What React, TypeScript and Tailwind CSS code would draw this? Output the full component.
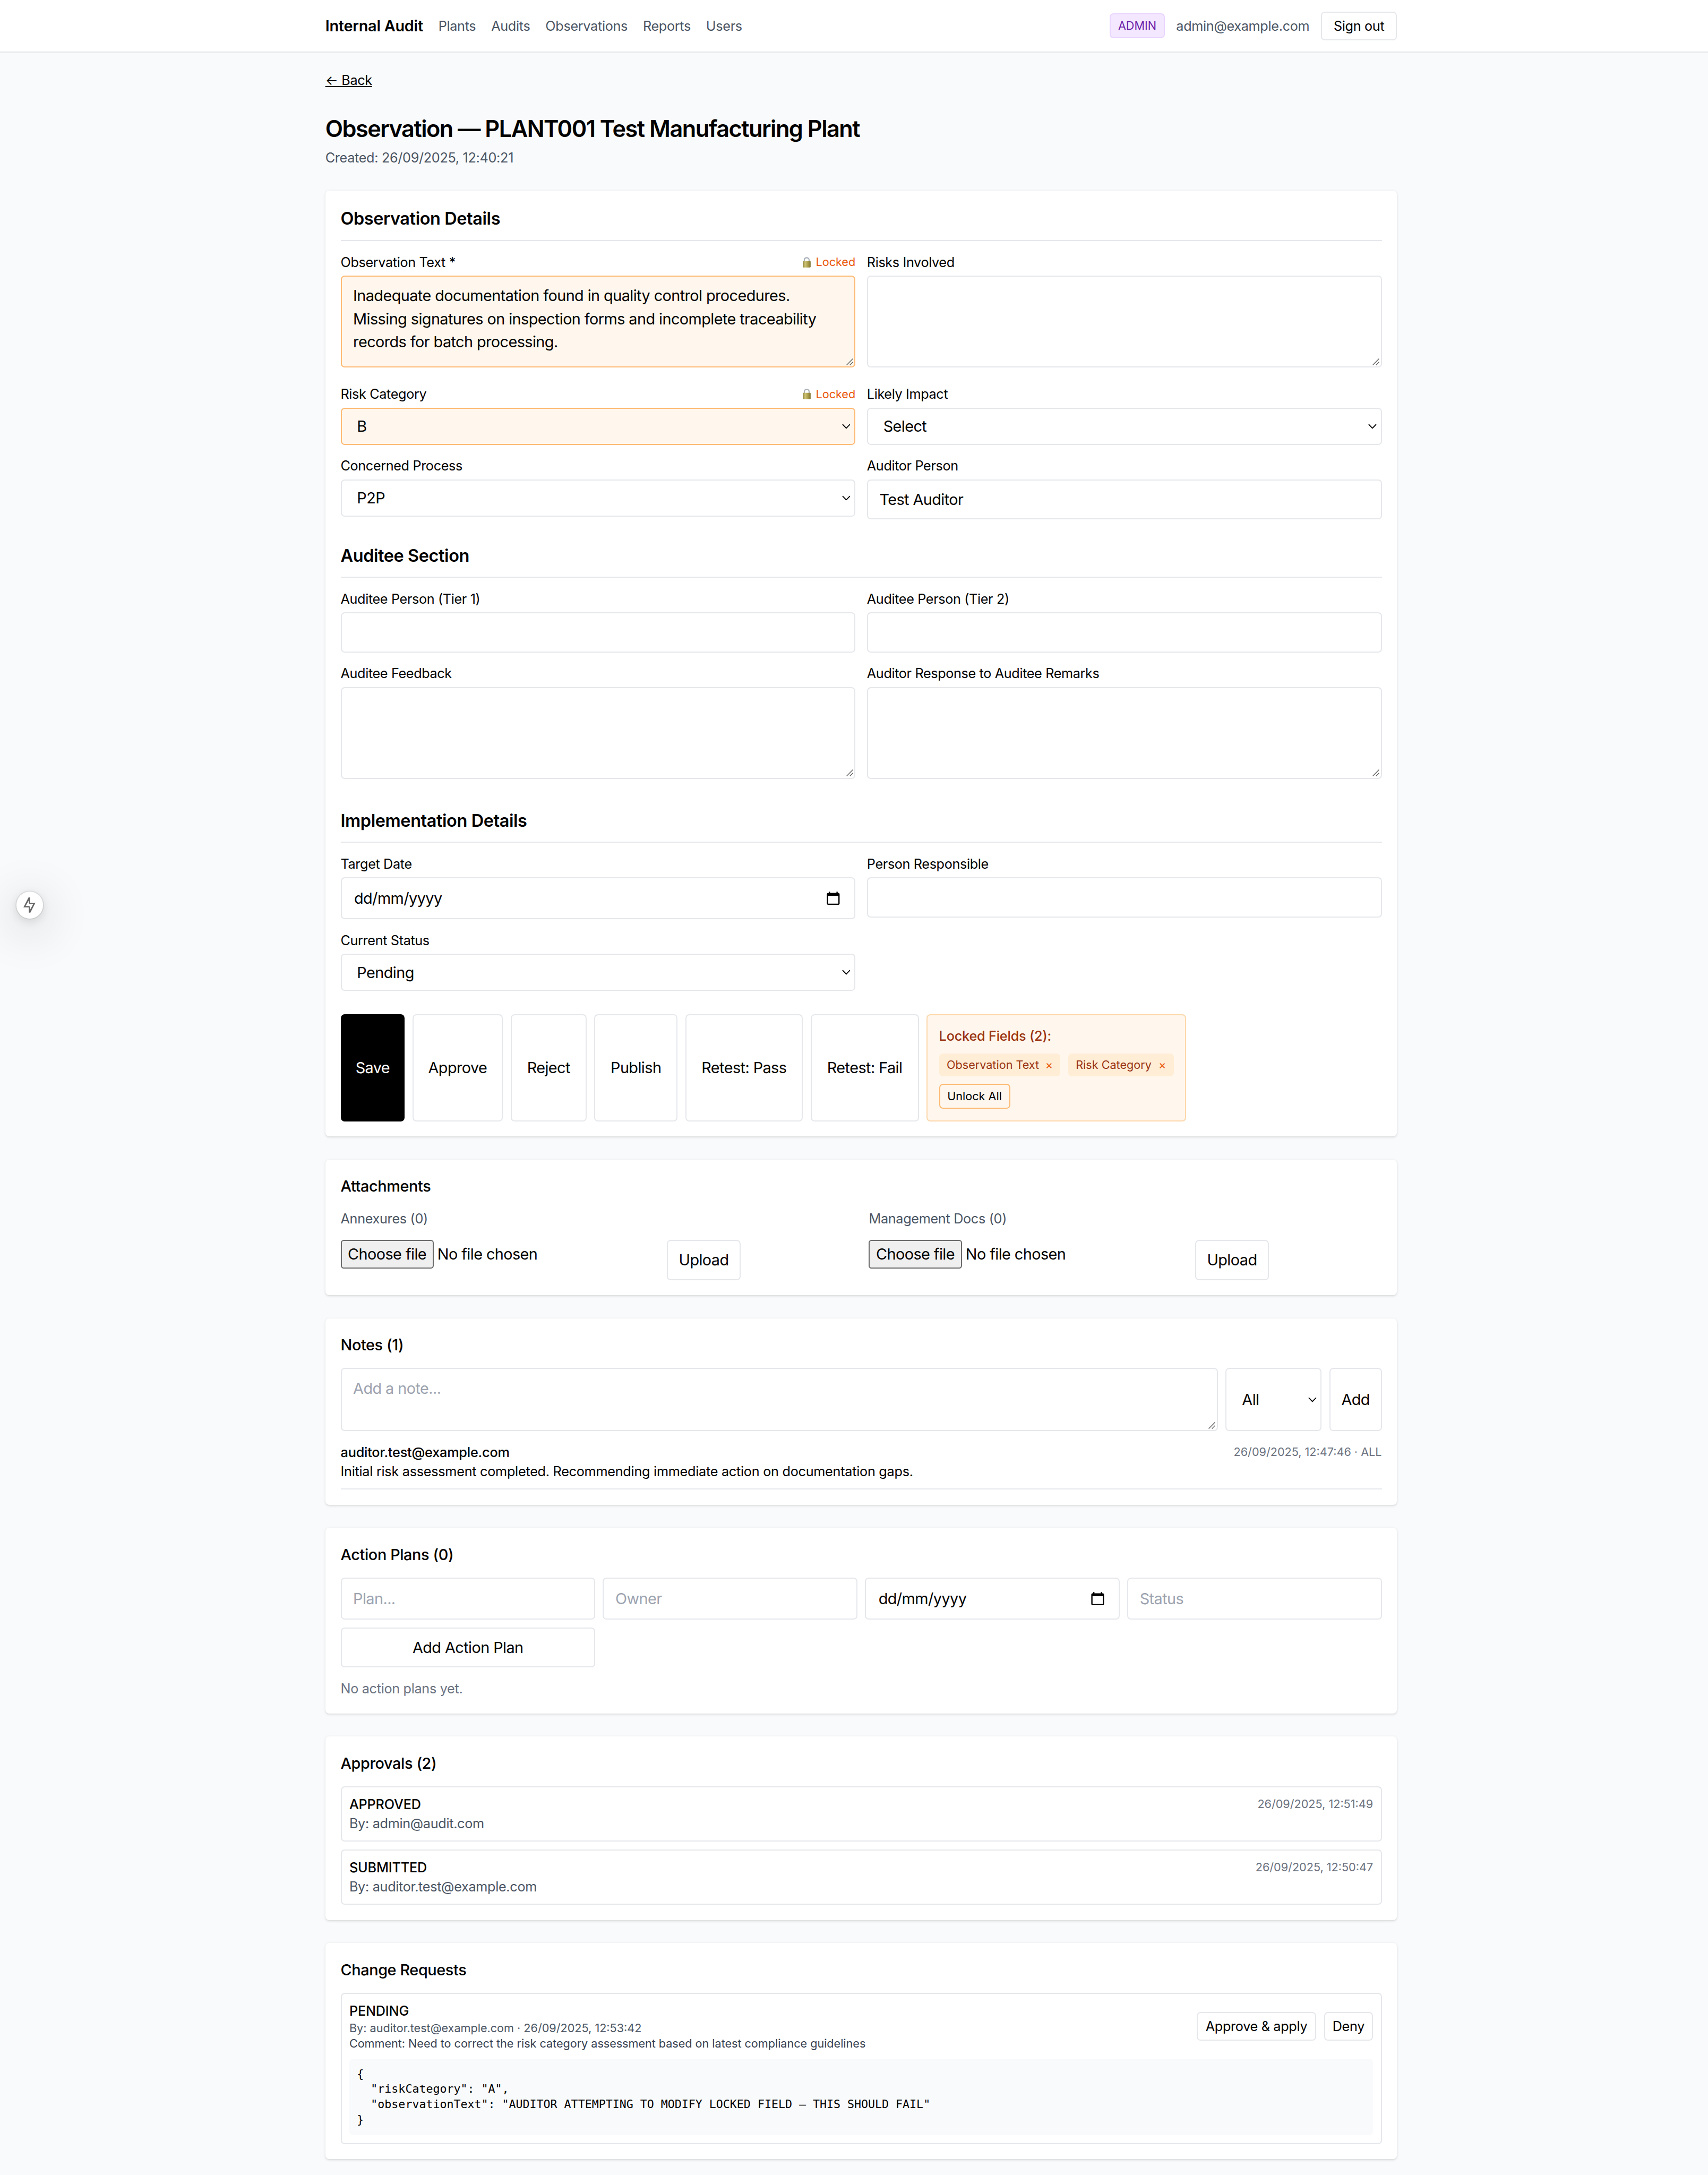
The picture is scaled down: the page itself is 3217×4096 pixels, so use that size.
import { type ReactNode } from 'react';

const LINE = 'border-[1.12px] border-[#e5e7eb]';
const HEAD = 'font-medium tracking-[-0.0135em]';
const SMALL = 'text-sm tracking-[-0.0125em]';

function Resizer() {
  return (
    <svg className="absolute right-[1.5px] bottom-[1.3px] h-[7.2px] w-[7.2px]" viewBox="0 0 7.2 7.2" fill="none" stroke="#5f5f5f" strokeWidth="0.75">
      <path d="M0.3 6.9 6.9 0.3M3.7 6.9 6.9 3.7" />
    </svg>
  );
}

function Chevron() {
  return (
    <svg className="absolute right-[4.3px] top-1/2 h-[5.4px] w-[8.8px] -translate-y-1/2" viewBox="0 0 8.8 5.4" fill="none" stroke="#000" strokeWidth="1">
      <path d="M0.5 0.5 4.4 4.6 8.3 0.5" />
    </svg>
  );
}

function CalendarIcon() {
  return (
    <svg className="ml-auto h-[15px] w-4" viewBox="0 0 24 24" preserveAspectRatio="none">
      <path d="M20 3h-1V1h-2v2H7V1H5v2H4c-1.1 0-2 .9-2 2v16c0 1.1.9 2 2 2h16c1.1 0 2-.9 2-2V5c0-1.1-.9-2-2-2zm0 18H4V8h16v13z" />
    </svg>
  );
}

function LockIcon() {
  return (
    <svg className="mr-[4.5px] h-[11.2px] w-[9.4px]" viewBox="0 0 9.4 11.2">
      <defs>
        <linearGradient id="lock-body" x1="0" x2="1" y1="0" y2="0">
          <stop offset="0" stopColor="#8f8340" />
          <stop offset="0.3" stopColor="#cdc374" />
          <stop offset="0.65" stopColor="#aa9e4b" />
          <stop offset="1" stopColor="#827534" />
        </linearGradient>
      </defs>
      <path d="M2.2 5V3.3C2.2 1.7 3.2 0.8 4.7 0.8S7.2 1.7 7.2 3.3V5" fill="none" stroke="#a9b1b8" strokeWidth="1.2" />
      <rect x="0.6" y="4.3" width="8.2" height="6.6" rx="0.7" fill="url(#lock-body)" />
    </svg>
  );
}

function Field({ label, locked, children, tail }: { label: string; locked?: boolean; children: ReactNode; tail?: boolean }) {
  return (
    <div className={tail ? 'pb-1.5' : ''}>
      <div className="mb-1 flex h-5 items-center justify-between">
        <span className="text-sm tracking-[-0.0145em]">{label}</span>
        {locked && (
          <span className="flex items-center text-xs tracking-normal text-[#ea580c]">
            <LockIcon />
            Locked
          </span>
        )}
      </div>
      {children}
    </div>
  );
}

function TextArea({ locked, children }: { locked?: boolean; children?: ReactNode }) {
  return (
    <div className={locked ? 'relative h-24 rounded border-[1.12px] border-[#fdba74] bg-[#fff7ed] px-3 py-2' : `relative h-24 rounded ${LINE} px-3 py-2`}>
      {children}
      <Resizer />
    </div>
  );
}

function Select({ value, locked }: { value: string; locked?: boolean }) {
  return (
    <div className={locked ? 'relative flex h-[39px] items-center rounded border-[1.12px] border-[#fdba74] bg-[#fff7ed] px-4' : `relative flex h-[39px] items-center rounded ${LINE} px-4`}>
      {value}
      <Chevron />
    </div>
  );
}

function Input({ value }: { value?: string }) {
  return <div className={`flex h-[42px] items-center rounded ${LINE} px-3`}>{value}</div>;
}

function DateInput() {
  return (
    <div className={`flex h-11 items-center rounded ${LINE} pr-3.5 pl-[13px]`}>
      <span>dd/mm/yyyy</span>
      <CalendarIcon />
    </div>
  );
}

function Section({ title, children }: { title: string; children: ReactNode }) {
  return (
    <section>
      <h2 className="h-[37px] border-b-[1.12px] border-[#e5e7eb] text-lg font-semibold tracking-[-0.0123em]">{title}</h2>
      <div className="mt-3 grid grid-cols-2 gap-3">{children}</div>
    </section>
  );
}

function Card({ title, children }: { title: string; children: ReactNode }) {
  return (
    <div className="rounded bg-white p-4 shadow-sm">
      <h3 className={`mb-3 ${HEAD}`}>{title}</h3>
      {children}
    </div>
  );
}

function FileRow({ label }: { label: string }) {
  return (
    <div>
      <div className={`mb-3 ${SMALL} text-[#4b5563]`}>{label}</div>
      <div className="flex items-start">
        <div className="flex w-[340.8px] items-center">
          <span className="flex h-[30px] w-[97.2px] items-center justify-center rounded-[3px] border-[1.12px] border-[#6b6b6b] bg-[#efefef]">Choose file</span>
          <span className="ml-1">No file chosen</span>
        </div>
        <span className={`flex h-[42px] w-[77.6px] items-center justify-center rounded ${LINE}`}>Upload</span>
      </div>
    </div>
  );
}

function Approval({ status, by, at }: { status: string; by: string; at: string }) {
  return (
    <div className={`h-[58px] rounded ${LINE} px-2 pt-[7.9px] ${SMALL}`}>
      <div className="flex items-center justify-between">
        <span className="font-medium tracking-[-0.0072em]">{status}</span>
        <span className="text-xs tracking-normal text-[#6b7280]">{at}</span>
      </div>
      <div className="text-[#4b5563]">By: {by}</div>
    </div>
  );
}

export default function App() {
  return (
    <div className="relative min-h-[calc(100vh/1.802)] overflow-hidden bg-[#f9fafb] font-['Inter',sans-serif] tracking-[-0.02em] text-black [zoom:1.802]">
      <header className={`flex h-[55px] items-center border-b-[1.12px] border-[#e5e7eb] bg-white pr-[325px] pl-[340px] ${SMALL}`}>
        <span className="text-base font-semibold tracking-[-0.0086em]">Internal Audit</span>
        <nav className="ml-4 flex gap-4 text-[#4b5563]">
          <span>Plants</span>
          <span>Audits</span>
          <span>Observations</span>
          <span>Reports</span>
          <span>Users</span>
        </nav>
        <div className="ml-auto flex items-center gap-3">
          <span className="flex h-[26px] w-[57.4px] items-center justify-center rounded border-[1.12px] border-[#e9d5ff] bg-[#f3e8ff] text-xs tracking-normal text-[#6b21a8]">ADMIN</span>
          <span className="text-[#4b5563]">admin@example.com</span>
          <span className={`flex h-[30px] w-[79.6px] items-center justify-center rounded ${LINE}`}>Sign out</span>
        </div>
      </header>

      <main className="mr-[325px] ml-[340px] space-y-6 py-4">
        <div className="h-6">
          <span className={`${SMALL} underline`}>← Back</span>
        </div>
        <div>
          <h1 className="text-2xl font-semibold tracking-[-0.0345em]">Observation — PLANT001 Test Manufacturing Plant</h1>
          <p className={`mt-1 ${SMALL} text-[#4b5563]`}>Created: 26/09/2025, 12:40:21</p>
        </div>

        <div className="space-y-6 rounded bg-white p-4 shadow-sm">
          <Section title="Observation Details">
            <Field label="Observation Text *" locked tail>
              <TextArea locked>
                Inadequate documentation found in quality control procedures.
                <br />
                Missing signatures on inspection forms and incomplete traceability
                <br />
                records for batch processing.
              </TextArea>
            </Field>
            <Field label="Risks Involved" tail>
              <TextArea />
            </Field>
            <Field label="Risk Category" locked>
              <Select value="B" locked />
            </Field>
            <Field label="Likely Impact">
              <Select value="Select" />
            </Field>
            <Field label="Concerned Process">
              <Select value="P2P" />
            </Field>
            <Field label="Auditor Person">
              <Input value="Test Auditor" />
            </Field>
          </Section>

          <Section title="Auditee Section">
            <Field label="Auditee Person (Tier 1)">
              <Input />
            </Field>
            <Field label="Auditee Person (Tier 2)">
              <Input />
            </Field>
            <Field label="Auditee Feedback" tail>
              <TextArea />
            </Field>
            <Field label="Auditor Response to Auditee Remarks" tail>
              <TextArea />
            </Field>
          </Section>

          <Section title="Implementation Details">
            <Field label="Target Date">
              <DateInput />
            </Field>
            <Field label="Person Responsible">
              <Input />
            </Field>
            <Field label="Current Status">
              <Select value="Pending" />
            </Field>
          </Section>

          <div className="flex h-28 gap-2">
            <span className="flex w-[67px] items-center justify-center rounded bg-black text-white">Save</span>
            <span className={`flex w-[94.6px] items-center justify-center rounded ${LINE}`}>Approve</span>
            <span className={`flex w-[79.6px] items-center justify-center rounded ${LINE}`}>Reject</span>
            <span className={`flex w-[87px] items-center justify-center rounded ${LINE}`}>Publish</span>
            <span className={`flex w-[123px] items-center justify-center rounded ${LINE}`}>Retest: Pass</span>
            <span className={`flex w-[113.2px] items-center justify-center rounded ${LINE}`}>Retest: Fail</span>
            <div className="w-[271.6px] rounded border-[1.12px] border-[#fed7aa] bg-[#fff7ed] p-3">
              <div className="text-sm font-medium tracking-[-0.0072em] text-[#9a3412]">Locked Fields (2):</div>
              <div className="mt-2 flex gap-2 text-xs tracking-normal text-[#9a3412]">
                <span className="flex h-6 w-[127.2px] items-center justify-between rounded bg-[#ffedd5] px-2">
                  Observation Text<span className="text-[#ea580c]">×</span>
                </span>
                <span className="flex h-6 w-[110.6px] items-center justify-between rounded bg-[#ffedd5] px-2">
                  Risk Category<span className="text-[#ea580c]">×</span>
                </span>
              </div>
              <span className="mt-2 flex h-[26px] w-[74.4px] items-center justify-center rounded border-[1.12px] border-[#fdba74] text-xs tracking-normal">Unlock All</span>
            </div>
          </div>
        </div>

        <Card title="Attachments">
          <div className="grid grid-cols-2 gap-4">
            <FileRow label="Annexures (0)" />
            <FileRow label="Management Docs (0)" />
          </div>
        </Card>

        <Card title="Notes (1)">
          <div className="flex h-[66px] gap-2">
            <div className={`relative flex-1 rounded ${LINE} px-3 py-2 text-[#9ca3af]`}>
              Add a note...
              <Resizer />
            </div>
            <div className={`relative flex w-[100.4px] items-center rounded ${LINE} px-4`}>
              All
              <Chevron />
            </div>
            <span className={`flex w-[54.8px] items-center justify-center rounded ${LINE}`}>Add</span>
          </div>
          <div className="mt-3 h-[49px] border-b-[1.12px] border-[#e5e7eb] text-sm">
            <div className="flex items-center justify-between">
              <span className="font-medium tracking-[-0.0072em]">auditor.test@example.com</span>
              <span className="text-xs tracking-normal text-[#6b7280]">26/09/2025, 12:47:46 · ALL</span>
            </div>
            <div className="tracking-[-0.0104em]">Initial risk assessment completed. Recommending immediate action on documentation gaps.</div>
          </div>
        </Card>

        <Card title="Action Plans (0)">
          <div className="grid grid-cols-4 gap-2">
            <div className={`flex h-11 items-center rounded ${LINE} px-3 text-[#9ca3af]`}>Plan...</div>
            <div className={`flex h-11 items-center rounded ${LINE} px-3 text-[#9ca3af]`}>Owner</div>
            <DateInput />
            <div className={`flex h-11 items-center rounded ${LINE} px-3 text-[#9ca3af]`}>Status</div>
            <span className={`flex h-[42px] items-center justify-center rounded ${LINE}`}>Add Action Plan</span>
          </div>
          <div className={`mt-3 ${SMALL} text-[#6b7280]`}>No action plans yet.</div>
        </Card>

        <Card title="Approvals (2)">
          <div className="space-y-2">
            <Approval status="APPROVED" by="admin@audit.com" at="26/09/2025, 12:51:49" />
            <Approval status="SUBMITTED" by="auditor.test@example.com" at="26/09/2025, 12:50:47" />
          </div>
        </Card>

        <Card title="Change Requests">
          <div className={`h-[158px] rounded ${LINE} px-2 pt-[7.9px]`}>
            <div className={`flex items-center justify-between ${SMALL}`}>
              <div>
                <div className="font-medium tracking-[-0.0072em]">PENDING</div>
                <div className="text-xs tracking-normal text-[#4b5563]">By: auditor.test@example.com · 26/09/2025, 12:53:42</div>
                <div className="text-xs tracking-[-0.001em] text-[#374151]">Comment: Need to correct the risk category assessment based on latest compliance guidelines</div>
              </div>
              <div className="flex gap-2">
                <span className={`flex h-[30px] w-[125px] items-center justify-center rounded ${LINE}`}>Approve &amp; apply</span>
                <span className={`flex h-[30px] w-[51.4px] items-center justify-center rounded ${LINE}`}>Deny</span>
              </div>
            </div>
            <pre className="mt-2 rounded bg-[#f9fafb] p-2 font-['DejaVu_Sans_Mono',monospace] text-xs tracking-normal">
              {'{\n  "riskCategory": "A",\n  "observationText": "AUDITOR ATTEMPTING TO MODIFY LOCKED FIELD – THIS SHOULD FAIL"\n}'}
            </pre>
          </div>
        </Card>
      </main>

      <div className="absolute top-[932px] left-[17px] flex size-7 items-center justify-center rounded-full bg-white shadow-[0_0_0_1px_rgba(0,0,0,0.08),0_3px_10px_rgba(0,0,0,0.12),0_10px_48px_8px_rgba(0,0,0,0.12)]">
        <svg className="size-4" viewBox="0 0 16 16" fill="#666" fillRule="evenodd">
          <path d="M7.1 0H8.7V5.6H14.3L9 16H7.3V10.4H1.7ZM7.4 3.2 4 9H7.4L8.6 9.6V13L12 7H8.6L7.4 6.2Z" />
        </svg>
      </div>
    </div>
  );
}
